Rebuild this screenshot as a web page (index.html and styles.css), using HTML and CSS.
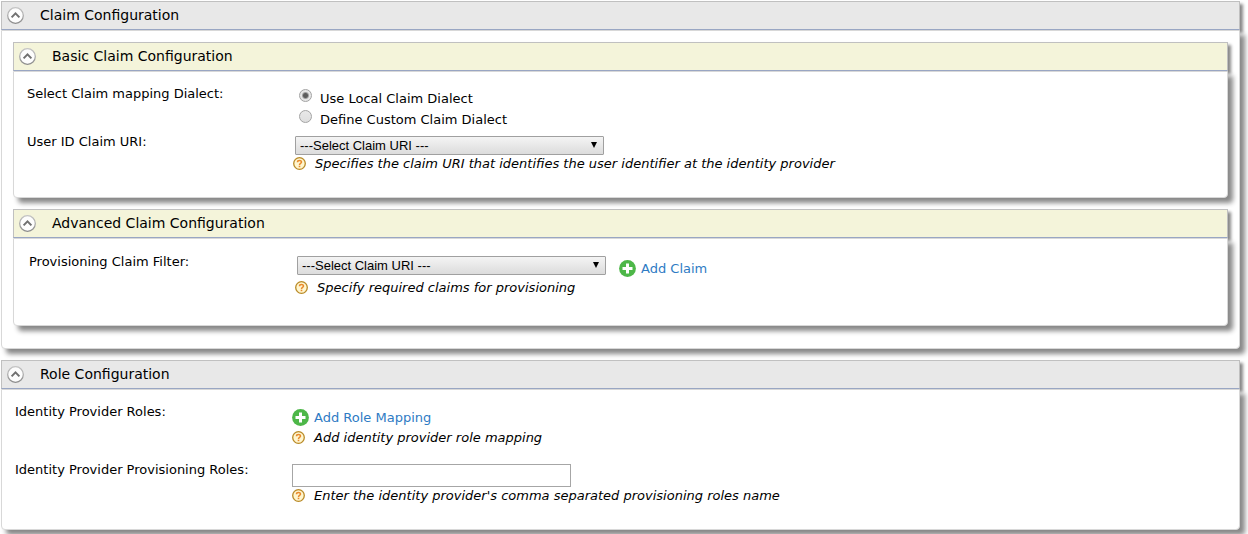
FILE: index.html
```html
<!DOCTYPE html>
<html lang="en">
<head>
<meta charset="utf-8">
<title>Identity Provider</title>
<link rel="stylesheet" href="styles.css">
</head>
<body>
<svg class="sprite" aria-hidden="true">
  <defs>
    <linearGradient id="ring" x1="0" y1="0" x2="0" y2="1">
      <stop offset="0" stop-color="#c4c4c4"/>
      <stop offset="1" stop-color="#8c8c8c"/>
    </linearGradient>
  </defs>
  <symbol id="collapse" viewBox="0 0 17 17">
    <circle cx="8.5" cy="8.5" r="7.8" fill="#fdfdfd" stroke="url(#ring)" stroke-width="1.2"/>
    <path d="M4.6 10.4 8.5 6.4 12.4 10.4" fill="none" stroke="#707070" stroke-width="2"/>
  </symbol>
  <symbol id="plus" viewBox="0 0 17 17">
    <circle cx="8.5" cy="8.5" r="8.4" fill="#4db748"/>
    <path d="M8.5 3.5v10M3.5 8.5h10" fill="none" stroke="#fff" stroke-width="3"/>
  </symbol>
  <symbol id="help" viewBox="0 0 13 13">
    <circle cx="6.5" cy="6.5" r="5.8" fill="#fff6cf" stroke="#b98a26" stroke-width="1.3"/>
    <path d="M4.5 5.2C4.5 3 8.5 3 8.5 5.1 8.5 6.5 6.5 6.3 6.5 7.9" fill="none" stroke="#e98a2c" stroke-width="1.5"/>
    <path d="M5.7 8.7h1.6v1.5H5.7z" fill="#e98a2c"/>
  </symbol>
</svg>

<main class="page">
  <section class="panel">
    <h2 class="panel-head">
      <button class="toggle" type="button" aria-label="Collapse"><svg class="icon"><use href="#collapse"/></svg></button>
      <span>Claim Configuration</span>
    </h2>
    <div class="panel-body panel-stack">
      <section class="panel">
        <h3 class="panel-head panel-head-sub">
          <button class="toggle" type="button" aria-label="Collapse"><svg class="icon"><use href="#collapse"/></svg></button>
          <span>Basic Claim Configuration</span>
        </h3>
        <div class="panel-body form form-basic">
          <span class="label" id="dialect">Select Claim mapping Dialect:</span>
          <div class="field" role="radiogroup" aria-labelledby="dialect">
            <label class="choice"><input class="radio" type="radio" name="dialect" checked>Use Local Claim Dialect</label>
            <label class="choice"><input class="radio" type="radio" name="dialect">Define Custom Claim Dialect</label>
          </div>
          <label class="label" for="user-id">User ID Claim URI:</label>
          <div class="field">
            <div class="select-wrap">
              <select class="select" id="user-id"><option>---Select Claim URI ---</option></select>
            </div>
            <p class="help"><svg class="help-icon"><use href="#help"/></svg>Specifies the claim URI that identifies the user identifier at the identity provider</p>
          </div>
        </div>
      </section>
      <section class="panel">
        <h3 class="panel-head panel-head-sub">
          <button class="toggle" type="button" aria-label="Collapse"><svg class="icon"><use href="#collapse"/></svg></button>
          <span>Advanced Claim Configuration</span>
        </h3>
        <div class="panel-body form form-advanced">
          <label class="label" for="filter">Provisioning Claim Filter:</label>
          <div class="field">
            <div class="inline">
              <div class="select-wrap">
                <select class="select" id="filter"><option>---Select Claim URI ---</option></select>
              </div>
              <a class="add" href="#"><svg class="icon"><use href="#plus"/></svg>Add Claim</a>
            </div>
            <p class="help"><svg class="help-icon"><use href="#help"/></svg>Specify required claims for provisioning</p>
          </div>
        </div>
      </section>
    </div>
  </section>

  <section class="panel">
    <h2 class="panel-head">
      <button class="toggle" type="button" aria-label="Collapse"><svg class="icon"><use href="#collapse"/></svg></button>
      <span>Role Configuration</span>
    </h2>
    <div class="panel-body form form-roles">
      <span class="label">Identity Provider Roles:</span>
      <div class="field">
        <a class="add" href="#"><svg class="icon"><use href="#plus"/></svg>Add Role Mapping</a>
        <p class="help"><svg class="help-icon"><use href="#help"/></svg>Add identity provider role mapping</p>
      </div>
      <label class="label" for="prov-roles">Identity Provider Provisioning Roles:</label>
      <div class="field">
        <input class="text" id="prov-roles" type="text">
        <p class="help"><svg class="help-icon"><use href="#help"/></svg>Enter the identity provider's comma separated provisioning roles name</p>
      </div>
    </div>
  </section>
</main>
</body>
</html>
```
FILE: styles.css
```css
* { box-sizing: border-box; }

body {
  margin: 0;
  background: #fff;
  color: #000;
  font: 13px/18px "DejaVu Sans", Verdana, sans-serif;
}

.sprite { position: absolute; width: 0; height: 0; }

.page {
  display: flex;
  flex-direction: column;
  gap: 11px;
  padding: 1px 8px 4px 1px;
}

/* Panels */
.panel-head {
  display: flex;
  align-items: flex-start;
  gap: 16px;
  margin: 0;
  padding: 4px 5px 5px;
  border: 1px solid #c0c0c0;
  border-bottom-color: #9aa7c4;
  background: #e8e8e8;
  box-shadow: 3px 3px 3px #888;
  color: #000;
  font-size: 14px;
  font-weight: normal;
  line-height: 18px;
}

.panel-head-sub { background: #f4f4da; }

.panel-body {
  border: 1px solid #d8d8d8;
  border-radius: 0 0 4px 4px;
  background: #fff;
  box-shadow: 5px 5px 5px #888;
}

.panel-stack {
  display: flex;
  flex-direction: column;
  gap: 11px;
  padding: 11px 11px 22px;
}

.toggle {
  display: flex;
  margin: 1px 0 0;
  padding: 0;
  border: 0;
  background: none;
}

.icon { flex: none; width: 17px; height: 17px; }

/* Forms */
.form {
  display: grid;
  grid-template-columns: 266px 1fr;
  align-items: start;
}

.form-basic { row-gap: 3px; padding: 13px 13px 24px; }
.form-advanced { padding: 14px 15px 28px; }
.form-roles {
  grid-template-columns: 277px 1fr;
  row-gap: 14px;
  padding: 13px 13px 24px;
}

.field { padding-top: 3px; }

.choice {
  display: flex;
  align-items: flex-start;
  gap: 8px;
  padding-left: 6px;
  line-height: 21px;
}

.radio {
  appearance: none;
  width: 13px;
  height: 13px;
  margin: 1px 0 0;
  border: 1px solid #a3a3a3;
  border-radius: 50%;
  background: linear-gradient(#e8e8e8, #dedede);
}

.radio:checked {
  background: radial-gradient(circle, #5c5c5c 0 2px, #e6e6e6 4px);
}

.select-wrap {
  position: relative;
  width: 309px;
  margin-left: 2px;
}

.select-wrap::after {
  content: "";
  position: absolute;
  top: 6px;
  right: 7px;
  border: solid transparent;
  border-width: 6px 3px 0;
  border-top-color: #000;
  pointer-events: none;
}

.select {
  display: block;
  appearance: none;
  width: 100%;
  height: 19px;
  padding: 0 4px;
  border: 1px solid #a0a0a0;
  border-radius: 1px;
  background: linear-gradient(#f4f4f4, #dcdcdc);
  color: #000;
  font: 13px/17px "Liberation Sans", Arial, sans-serif;
}

.inline { display: flex; align-items: flex-start; gap: 13px; }
.inline .add { padding-top: 4px; }

.add {
  display: flex;
  align-items: center;
  gap: 5px;
  width: max-content;
  color: #2e7bc4;
  line-height: 17px;
  text-decoration: none;
}

.help {
  display: flex;
  align-items: flex-start;
  gap: 9px;
  margin: 0;
  font-style: italic;
}

.help-icon { flex: none; width: 13px; height: 13px; margin-top: 2px; }
.inline + .help { margin-top: 2px; }
.form-roles .add { margin: 3px 0; }

.text {
  display: block;
  width: 279px;
  height: 23px;
  padding: 0 4px;
  border: 1px solid #a6a6a6;
  background: #fff;
  font: 13px "DejaVu Sans", Verdana, sans-serif;
}
```
